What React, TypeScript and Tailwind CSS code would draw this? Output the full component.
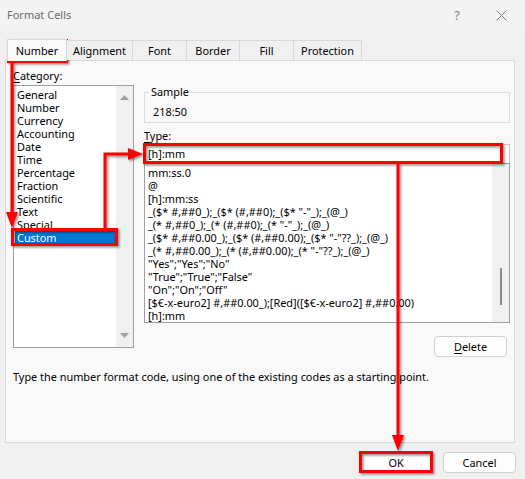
import React from "react";

const cats = [
  "General",
  "Number",
  "Currency",
  "Accounting",
  "Date",
  "Time",
  "Percentage",
  "Fraction",
  "Scientific",
  "Text",
  "Special",
  "Custom",
];

const fmts = [
  "mm:ss.0",
  "@",
  "[h]:mm:ss",
  '_($* #,##0_);_($* (#,##0);_($* "-"_);_(@_)',
  '_(* #,##0_);_(* (#,##0);_(* "-"_);_(@_)',
  '_($* #,##0.00_);_($* (#,##0.00);_($* "-"??_);_(@_)',
  '_(* #,##0.00_);_(* (#,##0.00);_(* "-"??_);_(@_)',
  '"Yes";"Yes";"No"',
  '"True";"True";"False"',
  '"On";"On";"Off"',
  "[$€-x-euro2] #,##0.00_);[Red]([$€-x-euro2] #,##0.00)",
  "[h]:mm",
];

const tabs: { label: string; w: string; sel?: boolean }[] = [
  { label: "Number", w: "w-[60px]", sel: true },
  { label: "Alignment", w: "w-[66px]" },
  { label: "Font", w: "w-[54px]" },
  { label: "Border", w: "w-[53px]" },
  { label: "Fill", w: "w-[54px]" },
  { label: "Protection", w: "w-[68px]" },
];

function Annotations() {
  const red = "#ff0000";
  return (
    <svg
      className="absolute inset-0 pointer-events-none"
      width={525}
      height={479}
      viewBox="0 0 525 479"
    >
      <defs>
        <filter id="sh" x="-20%" y="-20%" width="140%" height="140%">
          <feDropShadow dx="1.5" dy="1.5" stdDeviation="1" floodColor="#000" floodOpacity="0.45" />
        </filter>
      </defs>
      <g filter="url(#sh)" fill="none" stroke={red} strokeWidth={3}>
        <rect x={8.5} y={40.5} width={58} height={21} />
        <rect x={12.5} y={229.5} width={104} height={15} />
        <rect x={144.5} y={144.5} width={357} height={18} />
        <rect x={360.5} y={452.5} width={71} height={19} />
        <line x1={12} y1={62} x2={12} y2={214} />
        <polyline points="105,228 105,154 130,154" />
        <line x1={398} y1={164} x2={398} y2={437} />
      </g>
      <g filter="url(#sh)" fill={red} stroke="none">
        <polygon points="6,212 18,212 12,228" />
        <polygon points="128,148 128,160 143,154" />
        <polygon points="392,435 404,435 398,451" />
      </g>
    </svg>
  );
}

export default function App() {
  return (
    <div className="relative w-[525px] h-[479px] overflow-hidden bg-[#f0f0f0] font-['Noto_Sans',sans-serif] text-[10.9px] text-black">
      {/* Title bar */}
      <div className="h-[31px] bg-[#f3f3f3] flex items-center pl-[7px] text-[#6b6b6b] text-[11px]">
        <span>Format Cells</span>
        <span className="ml-auto text-[13px] text-[#8a8a8a] w-[12px] text-center">?</span>
        <span className="ml-[32px] mr-[18px] w-[12px] h-[12px] flex items-center justify-center">
          <svg width="11" height="11" viewBox="0 0 11 11">
            <path d="M0.5 0.5 L10.5 10.5 M10.5 0.5 L0.5 10.5" stroke="#7a7a7a" strokeWidth="1" />
          </svg>
        </span>
      </div>

      {/* Tabs */}
      <div className="mt-[8px] pl-[7px] h-[21px] flex items-end relative z-10">
        {tabs.map((t) =>
          t.sel ? (
            <div
              key={t.label}
              className={`${t.w} h-[22px] -mb-px bg-[#f9f9f9] border border-b-0 border-[#d9d9d9] flex items-center justify-center leading-[14px]`}
            >
              {t.label}
            </div>
          ) : (
            <div
              key={t.label}
              className={`${t.w} h-[20px] bg-[#f0f0f0] border border-l-0 border-b-0 border-[#d9d9d9] flex items-center justify-center leading-[14px]`}
            >
              {t.label}
            </div>
          )
        )}
      </div>

      {/* Panel */}
      <div className="ml-[5px] w-[510px] h-[383px] bg-[#f9f9f9] border border-[#d9d9d9] pl-[7px] pt-[7px]">
        <div className="flex">
          {/* Left column */}
          <div className="w-[121px] flex flex-col">
            <div className="h-[16px] leading-[16px]">
              <span className="underline underline-offset-2">C</span>ategory:
            </div>
            <div className="mt-[1px] h-[263px] border border-[#a0a0a0] bg-white flex">
              <div className="flex-1 pt-[2px] pl-[1px]">
                {cats.map((c) => (
                  <div
                    key={c}
                    className={`pl-[2px] ${
                      c === "Custom"
                        ? "bg-[#0078d7] text-white h-[14px] leading-[14px]"
                        : "h-[13px] leading-[13px]"
                    }`}
                  >
                    {c}
                  </div>
                ))}
              </div>
              <div className="w-[17px] bg-[#f0f0f0] flex flex-col items-center justify-between py-[9px]">
                <svg width="9" height="5" viewBox="0 0 9 5">
                  <polygon points="0,5 9,5 4.5,0" fill="#a0a0a0" />
                </svg>
                <svg width="9" height="5" viewBox="0 0 9 5">
                  <polygon points="0,0 9,0 4.5,5" fill="#a0a0a0" />
                </svg>
              </div>
            </div>
          </div>

          {/* Right column */}
          <div className="ml-[10px] w-[366px] flex flex-col">
            <div className="relative mt-[24px] h-[31px] border border-[#dcdcdc]">
              <span className="absolute left-[4px] top-[-9px] px-[2px] bg-[#f9f9f9] leading-[16px]">
                Sample
              </span>
              <div className="pt-[12px] pl-[8px] leading-[14px]">218:50</div>
            </div>
            <div className="mt-[5px] h-[16px] leading-[16px]">
              <span className="underline underline-offset-2">T</span>ype:
            </div>
            <div className="h-[19px] border border-[#c8c8c8] border-b-0 bg-white pl-[3px] leading-[18px]">
              [h]:mm
            </div>
            <div className="h-[160px] border border-[#a0a0a0] bg-white flex">
              <div className="flex-1 pt-[2px] pl-[3px] whitespace-nowrap overflow-hidden">
                {fmts.map((f, i) => (
                  <div key={i} className="h-[13px] leading-[13px]">
                    {f}
                  </div>
                ))}
              </div>
              <div className="w-[17px] bg-[#f0f0f0] flex justify-center">
                <div className="mt-[104px] w-[2px] h-[37px] bg-[#8a8a8a]" />
              </div>
            </div>
            <div className="mt-[13px] self-end mr-[3px] w-[73px] h-[21px] border border-[#d0d0d0] rounded-[4px] bg-[#fdfdfd] flex items-center justify-center leading-[14px]">
              <span>
                <span className="underline underline-offset-2">D</span>elete
              </span>
            </div>
          </div>
        </div>
        <div className="mt-[12px] leading-[16px]">
          Type the number format code, using one of the existing codes as a starting point.
        </div>
      </div>

      {/* Bottom buttons */}
      <div className="mt-[9px] flex justify-end gap-[11px] pr-[9px]">
        <div className="w-[72px] h-[21px] border border-[#d0d0d0] rounded-[4px] bg-[#fdfdfd] flex items-center justify-center leading-[14px]">
          OK
        </div>
        <div className="w-[73px] h-[21px] border border-[#d0d0d0] rounded-[4px] bg-[#fdfdfd] flex items-center justify-center leading-[14px]">
          Cancel
        </div>
      </div>

      <Annotations />
    </div>
  );
}
